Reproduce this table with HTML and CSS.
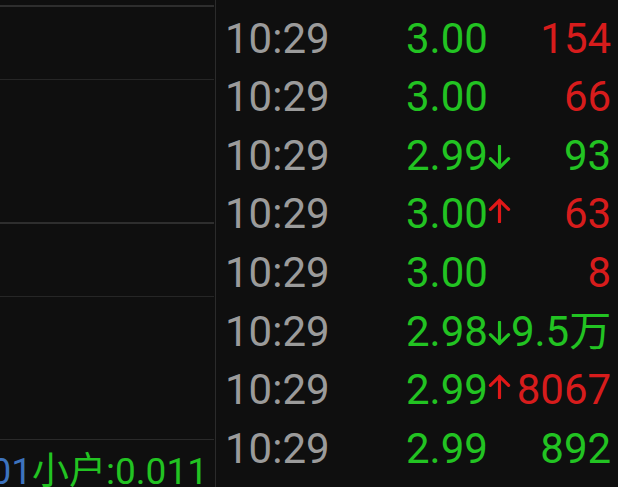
FILE: index.html
```html
<!DOCTYPE html>
<html lang="zh">
<head>
<meta charset="utf-8">
<title>分时成交</title>
<link rel="stylesheet" href="styles.css">
</head>
<body>
<div class="screen">
  <div class="left">
    <div class="sec s-top"></div>
    <div class="sec s-a"></div>
    <div class="sec s-b"></div>
    <div class="sec s-c"></div>
    <div class="sec s-d"></div>
    <div class="foot"><span class="blue">01</span><span class="green">小户:0.011</span></div>
  </div>
  <div class="ticks">
    <div class="row"><span class="time">10:29</span><span class="price green">3.00</span><span class="vol red">154</span></div>
    <div class="row"><span class="time">10:29</span><span class="price green">3.00</span><span class="vol red">66</span></div>
    <div class="row"><span class="time">10:29</span><span class="price green">2.99<svg class="arr dn" viewBox="0 0 20 22"><path d="M10 1V20M2 12L10 20L18 12"/></svg></span><span class="vol green">93</span></div>
    <div class="row"><span class="time">10:29</span><span class="price green">3.00<svg class="arr up" viewBox="0 0 20 22"><path d="M10 21V2M2 10L10 2L18 10"/></svg></span><span class="vol red">63</span></div>
    <div class="row"><span class="time">10:29</span><span class="price green">3.00</span><span class="vol red">8</span></div>
    <div class="row"><span class="time">10:29</span><span class="price green">2.98<svg class="arr dn" viewBox="0 0 20 22"><path d="M10 1V20M2 12L10 20L18 12"/></svg></span><span class="vol green">9.5万</span></div>
    <div class="row"><span class="time">10:29</span><span class="price green">2.99<svg class="arr up" viewBox="0 0 20 22"><path d="M10 21V2M2 10L10 2L18 10"/></svg></span><span class="vol red">8067</span></div>
    <div class="row"><span class="time">10:29</span><span class="price green">2.99</span><span class="vol green">892</span></div>
  </div>
</div>
</body>
</html>
```
FILE: styles.css
```css
html, body {
  margin: 0;
  padding: 0;
  background: #0f0f0f;
}
body {
  width: 618px;
  height: 487px;
  overflow: hidden;
  font-family: Roboto, "Noto Sans CJK SC", sans-serif;
}
.screen {
  display: flex;
  width: 618px;
  height: 487px;
}
.left {
  width: 216px;
  box-sizing: border-box;
  padding-right: 1px;
  border-right: 1px solid #2b2b2b;
  display: flex;
  flex-direction: column;
  flex-shrink: 0;
}
.sec {
  flex-shrink: 0;
}
.s-top { height: 5px; border-bottom: 2px solid #2e2e2e; }
.s-a { height: 72px; border-bottom: 1px solid #262626; }
.s-b { height: 142px; border-bottom: 2px solid #2e2e2e; }
.s-c { height: 72px; border-bottom: 1px solid #262626; }
.s-d { height: 142px; border-bottom: 1px solid #2a2a2a; }
.foot {
  display: flex;
  justify-content: flex-end;
  overflow: hidden;
  white-space: nowrap;
  font-size: 37px;
  line-height: 37px;
  padding: 13px 6px 0 0;
}
.blue { color: #3d73bf; }
.green { color: #22c322; }
.red { color: #d71c1c; }
.ticks {
  flex: 1;
  padding: 9.8px 7px 0 9px;
  display: flex;
  flex-direction: column;
}
.row {
  display: flex;
  align-items: baseline;
  height: 58.55px;
  line-height: 58.55px;
  font-size: 42px;
  white-space: nowrap;
}
.time {
  width: 181px;
  color: #9b9b9b;
  flex-shrink: 0;
}
.price {
  display: flex;
  align-items: baseline;
}
.vol {
  margin-left: auto;
}
.arr {
  width: 23px;
  height: 25px;
  margin-left: 0;
  fill: none;
  stroke-width: 2.8;
  stroke-linecap: round;
  stroke-linejoin: round;
  flex-shrink: 0;
}
.arr.dn { stroke: #22c322; }
.arr.up { stroke: #e01818; position: relative; top: -5px; }
```
